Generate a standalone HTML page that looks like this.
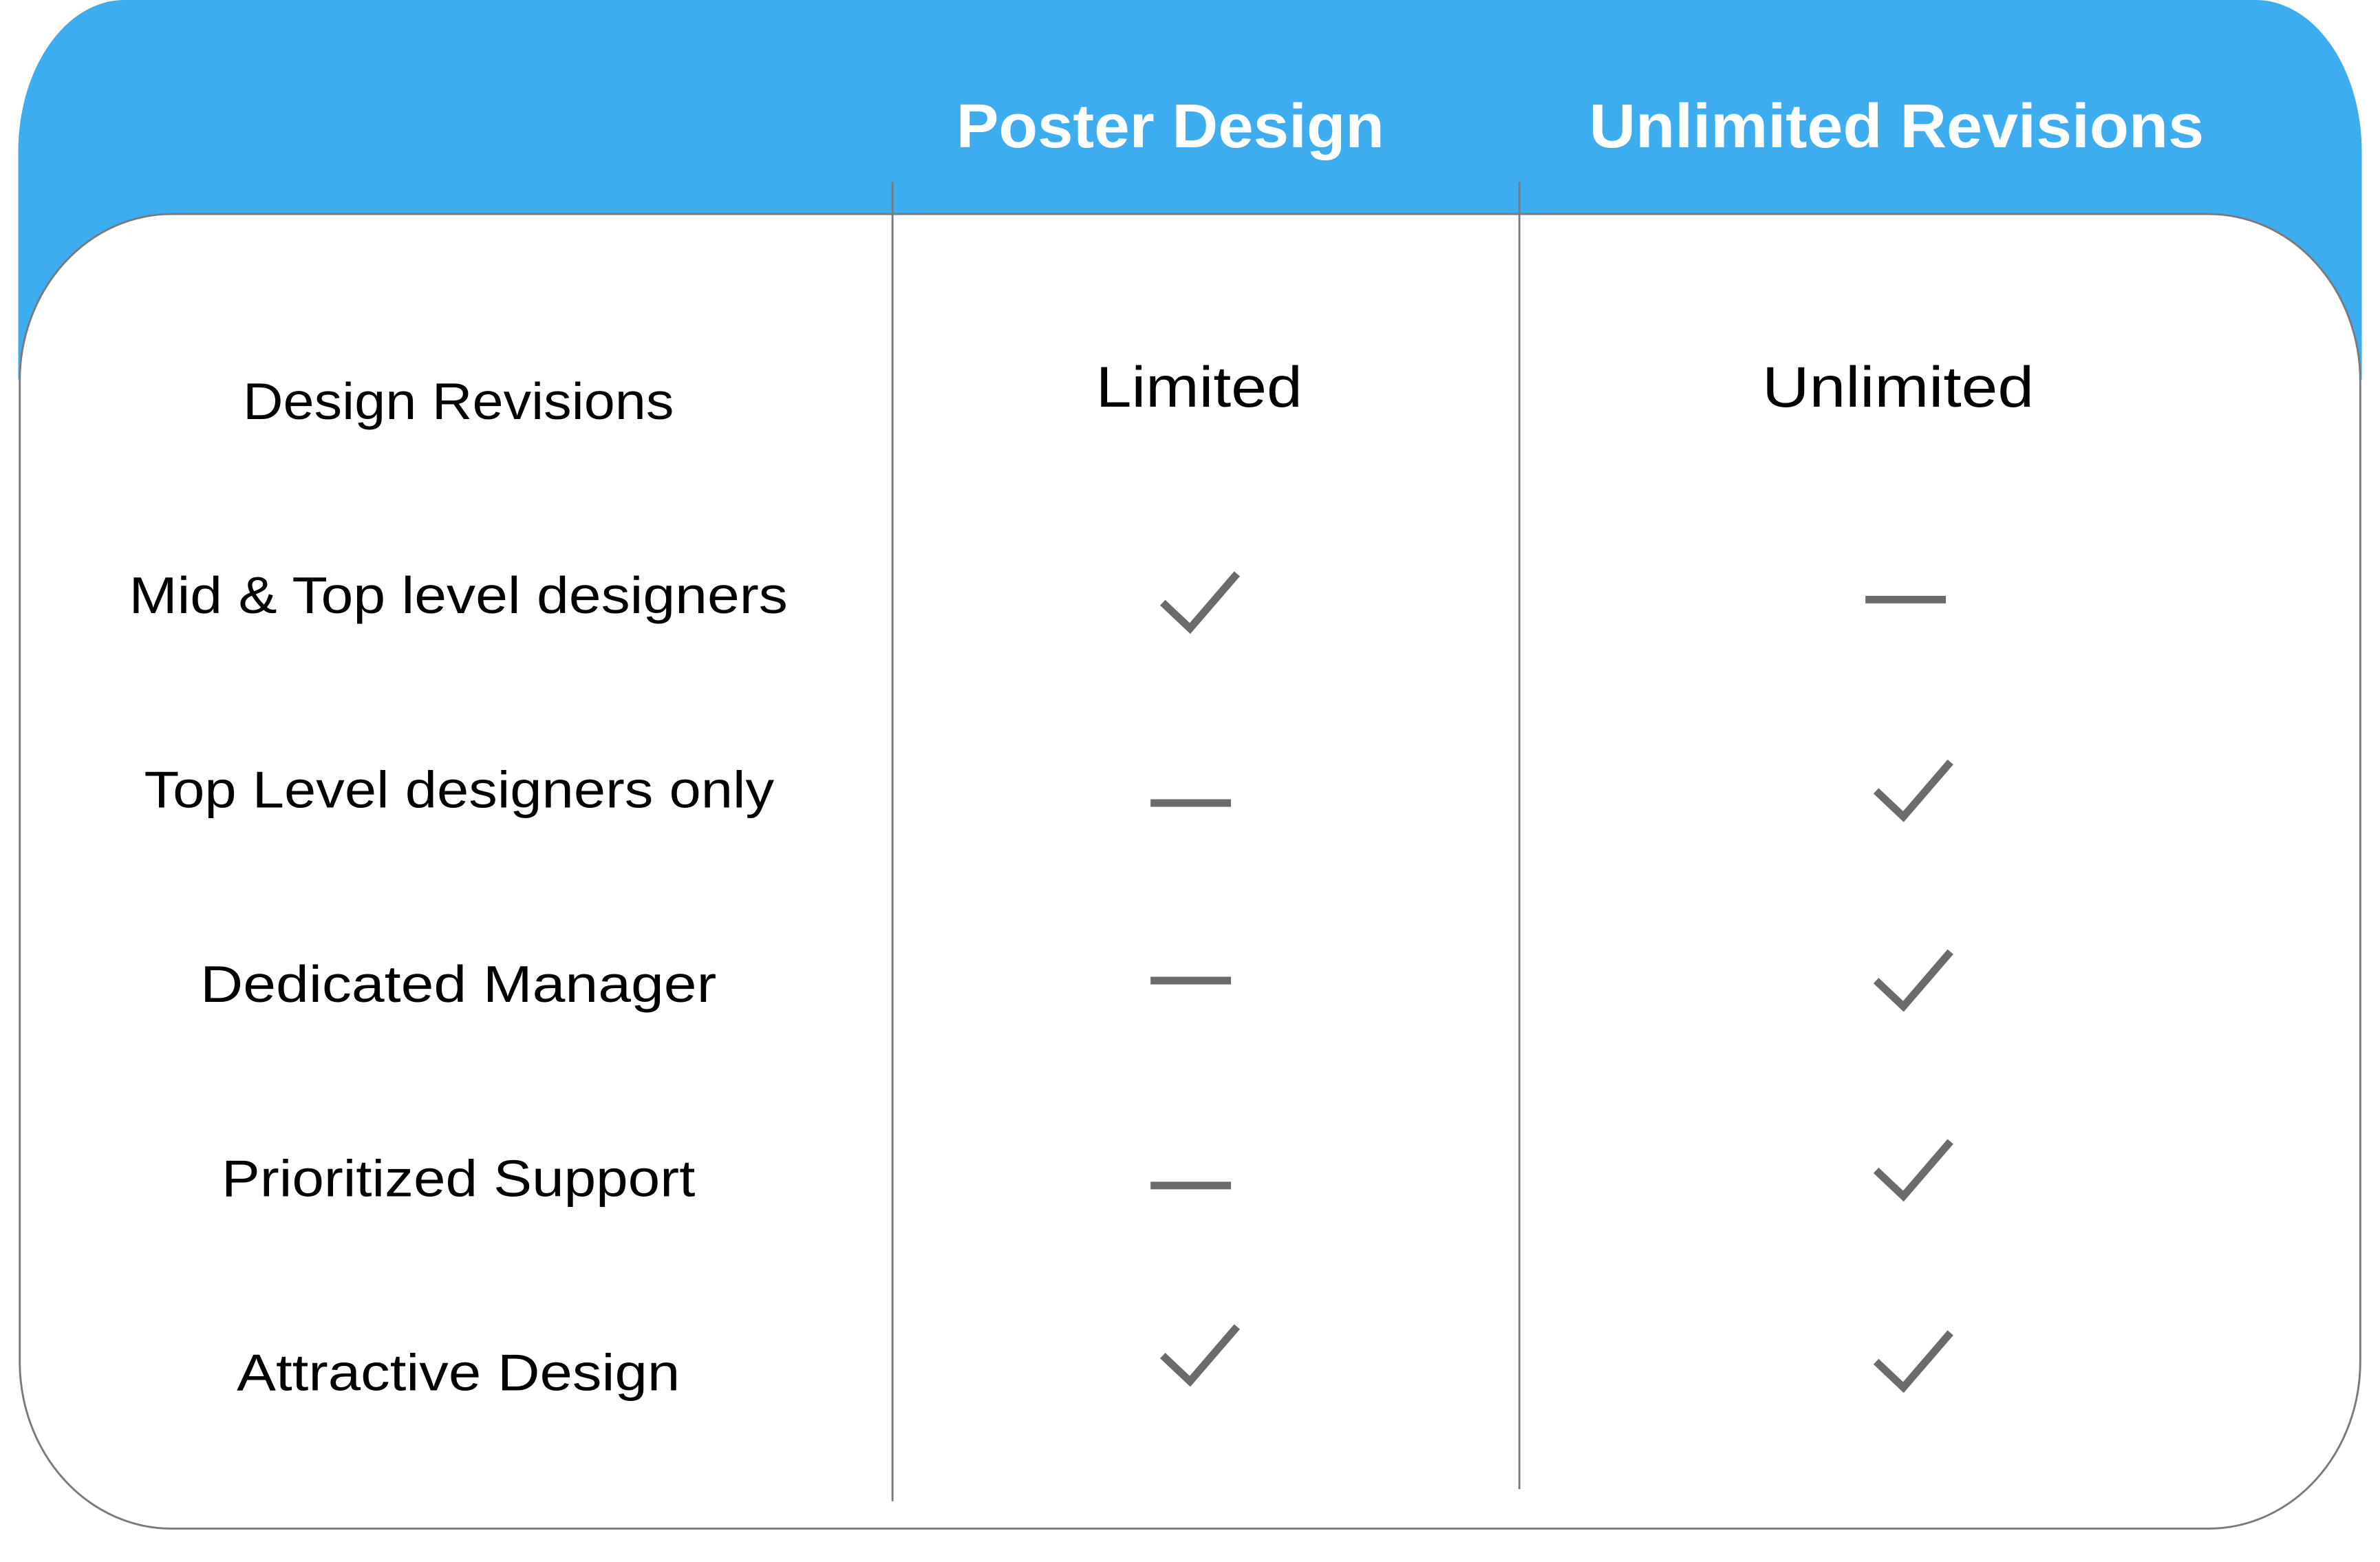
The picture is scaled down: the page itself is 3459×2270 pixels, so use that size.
<!DOCTYPE html>
<html><head><meta charset="utf-8"><style>
html,body{margin:0;padding:0;background:#fff;width:3459px;height:2259px;overflow:hidden}
#w{position:absolute;left:0;top:0;width:1568px;height:1024px;transform:scale(2.2060);transform-origin:0 0}
text{font-family:"Liberation Sans",sans-serif}
</style></head><body><div id="w">
<svg width="1568" height="1024" viewBox="0 0 1568 1024" xmlns="http://www.w3.org/2000/svg">
<path d="M12 100 A70 100 0 0 1 82 0 L1486 0 A70 100 0 0 1 1556 100 L1556 250 L12 250 Z" fill="#3eadf0"/>
<rect x="13" y="141" width="1542" height="866" rx="100" ry="110" fill="#fff" stroke="#7a7a7a" stroke-width="1.3"/>
<line x1="588" y1="120" x2="588" y2="989" stroke="#7a7a7a" stroke-width="1.3"/>
<line x1="1001" y1="120" x2="1001" y2="981" stroke="#7a7a7a" stroke-width="1.3"/>
<text x="630" y="97" font-size="41" font-weight="bold" fill="#fff" textLength="282" lengthAdjust="spacingAndGlyphs">Poster Design</text>
<text x="1047" y="97" font-size="41" font-weight="bold" fill="#fff" textLength="405" lengthAdjust="spacingAndGlyphs">Unlimited Revisions</text>
<g font-size="34" fill="#000">
<text x="160" y="276" textLength="284" lengthAdjust="spacingAndGlyphs">Design Revisions</text>
<text x="85" y="404" textLength="434" lengthAdjust="spacingAndGlyphs">Mid &amp; Top level designers</text>
<text x="95" y="532" textLength="415" lengthAdjust="spacingAndGlyphs">Top Level designers only</text>
<text x="132" y="660" textLength="340" lengthAdjust="spacingAndGlyphs">Dedicated Manager</text>
<text x="146" y="788" textLength="312" lengthAdjust="spacingAndGlyphs">Prioritized Support</text>
<text x="156" y="916" textLength="292" lengthAdjust="spacingAndGlyphs">Attractive Design</text>
</g>
<text x="722" y="268" font-size="38" fill="#000" textLength="136" lengthAdjust="spacingAndGlyphs">Limited</text>
<text x="1161" y="268" font-size="38" fill="#000" textLength="179" lengthAdjust="spacingAndGlyphs">Unlimited</text>
<g stroke="#6b6b6b" stroke-width="5" fill="none">
<path d="M766 397 L784 414 L815 378"/>
<path d="M766 893 L784 910 L815 874"/>
<path d="M1236 521 L1254 538 L1285 502"/>
<path d="M1236 646 L1254 663 L1285 627"/>
<path d="M1236 771 L1254 788 L1285 752"/>
<path d="M1236 897 L1254 914 L1285 878"/>
<path d="M1229 395 H1282"/>
<path d="M758 529 H811"/>
<path d="M758 646 H811"/>
<path d="M758 781 H811"/>
</g>
</svg>
</div></body></html>
